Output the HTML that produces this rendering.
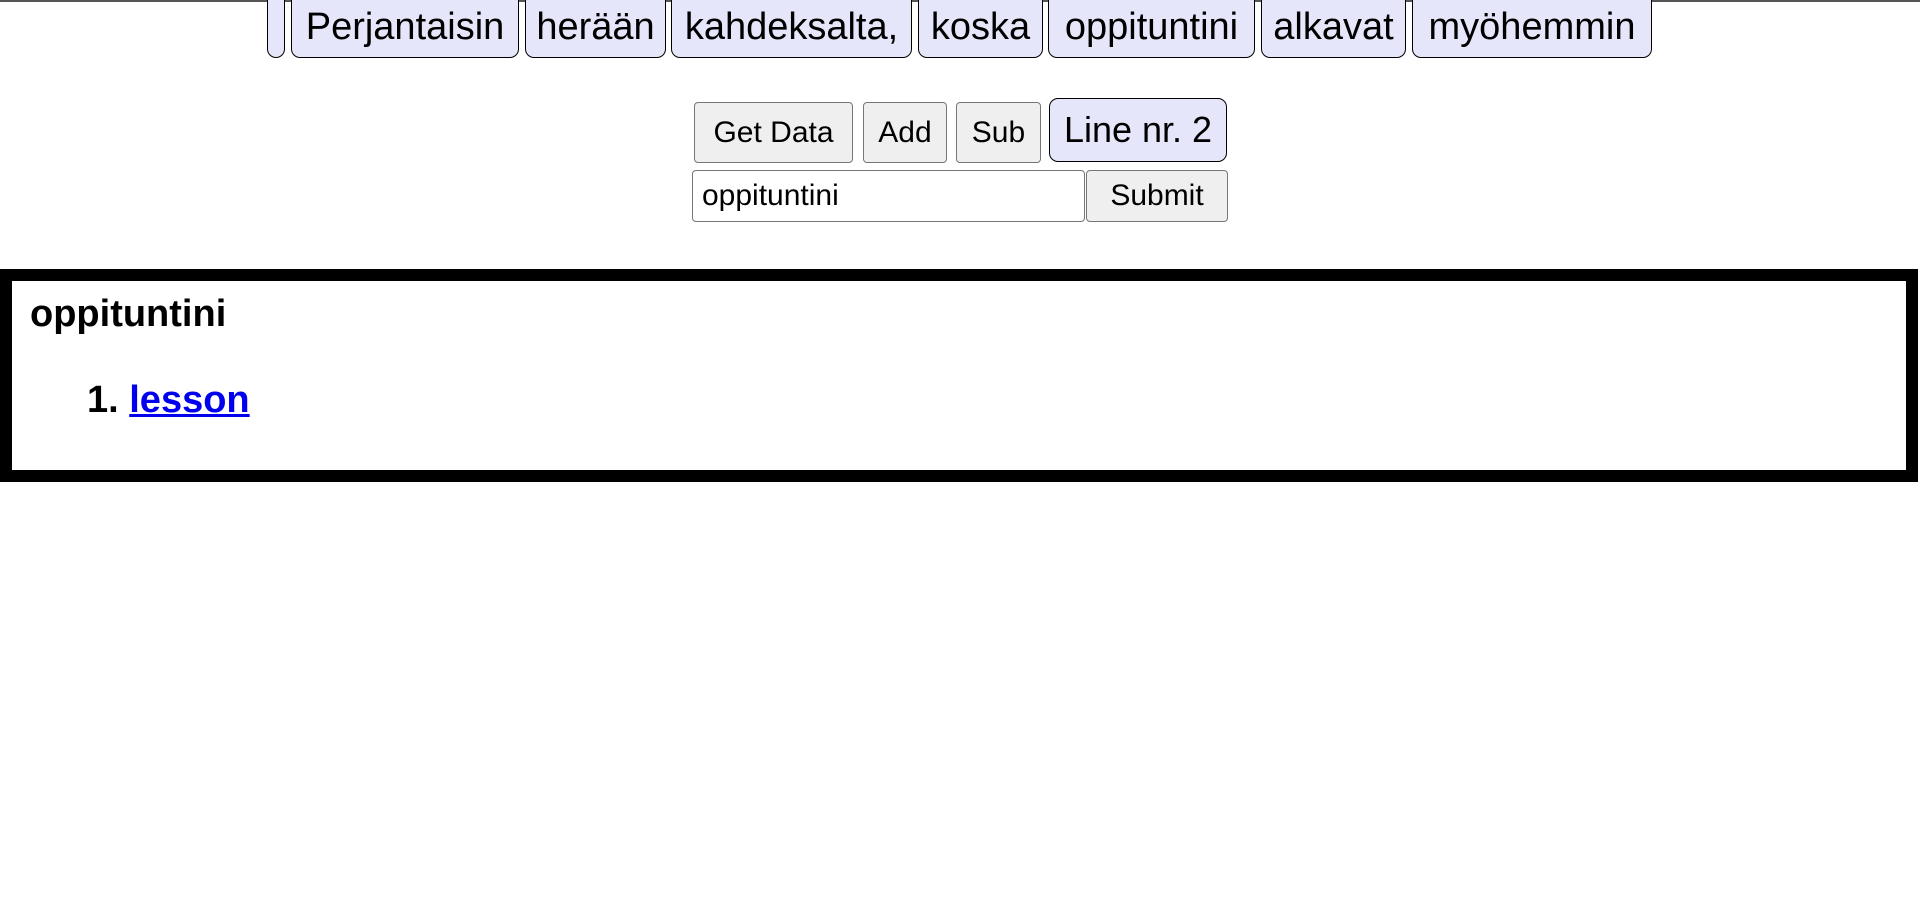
<!DOCTYPE html>
<html><head><meta charset="utf-8"><style>
html,body{margin:0;padding:0;background:#fff;width:1920px;height:913px;overflow:hidden;position:relative;font-family:"Liberation Sans",Arial,sans-serif;}
.topline{position:absolute;left:0;top:0;width:1920px;height:2px;background:#555;}
.w{position:absolute;top:-14px;height:72px;box-sizing:border-box;background:#e6e6fa;border:1.5px solid #000;border-radius:9px;font-size:38px;line-height:80px;text-align:center;color:#000;white-space:nowrap;}
.b{position:absolute;box-sizing:border-box;background:#efefef;border:1.5px solid #767676;border-radius:4px;font-size:30px;text-align:center;color:#000;white-space:nowrap;}
.panel{position:absolute;left:0;top:269px;width:1918px;height:213px;box-sizing:border-box;border:12px solid #000;}
</style></head><body>
<div class="topline"></div>
<div class="w" style="left:267px;width:18px"></div>
<div class="w" style="left:291px;width:228px">Perjantaisin</div>
<div class="w" style="left:525px;width:141px">herään</div>
<div class="w" style="left:671px;width:241px">kahdeksalta,</div>
<div class="w" style="left:918px;width:125px">koska</div>
<div class="w" style="left:1048px;width:207px">oppituntini</div>
<div class="w" style="left:1261px;width:145px">alkavat</div>
<div class="w" style="left:1412px;width:240px">myöhemmin</div>

<div class="b" style="left:694px;top:102px;width:159px;height:61px;line-height:60px">Get Data</div>
<div class="b" style="left:863px;top:102px;width:84px;height:61px;line-height:60px">Add</div>
<div class="b" style="left:956px;top:102px;width:85px;height:61px;line-height:60px">Sub</div>
<div class="b" style="left:1049px;top:98px;width:178px;height:64px;line-height:62px;background:#e6e6fa;border-color:#000;border-radius:9px;font-size:36px">Line nr. 2</div>
<div class="b" style="left:692px;top:170px;width:393px;height:52px;line-height:49px;background:#fff;text-align:left;padding-left:9px;font-size:30px">oppituntini</div>
<div class="b" style="left:1086px;top:170px;width:142px;height:52px;line-height:49px">Submit</div>

<div class="panel">
<div style="position:absolute;left:18px;top:11px;font-size:38px;font-weight:bold;line-height:44px">oppituntini</div>
<div style="position:absolute;left:75px;top:97px;font-size:38px;font-weight:bold;line-height:44px">1. <a style="color:#0000ee;text-decoration:underline">lesson</a></div>
</div>
</body></html>
